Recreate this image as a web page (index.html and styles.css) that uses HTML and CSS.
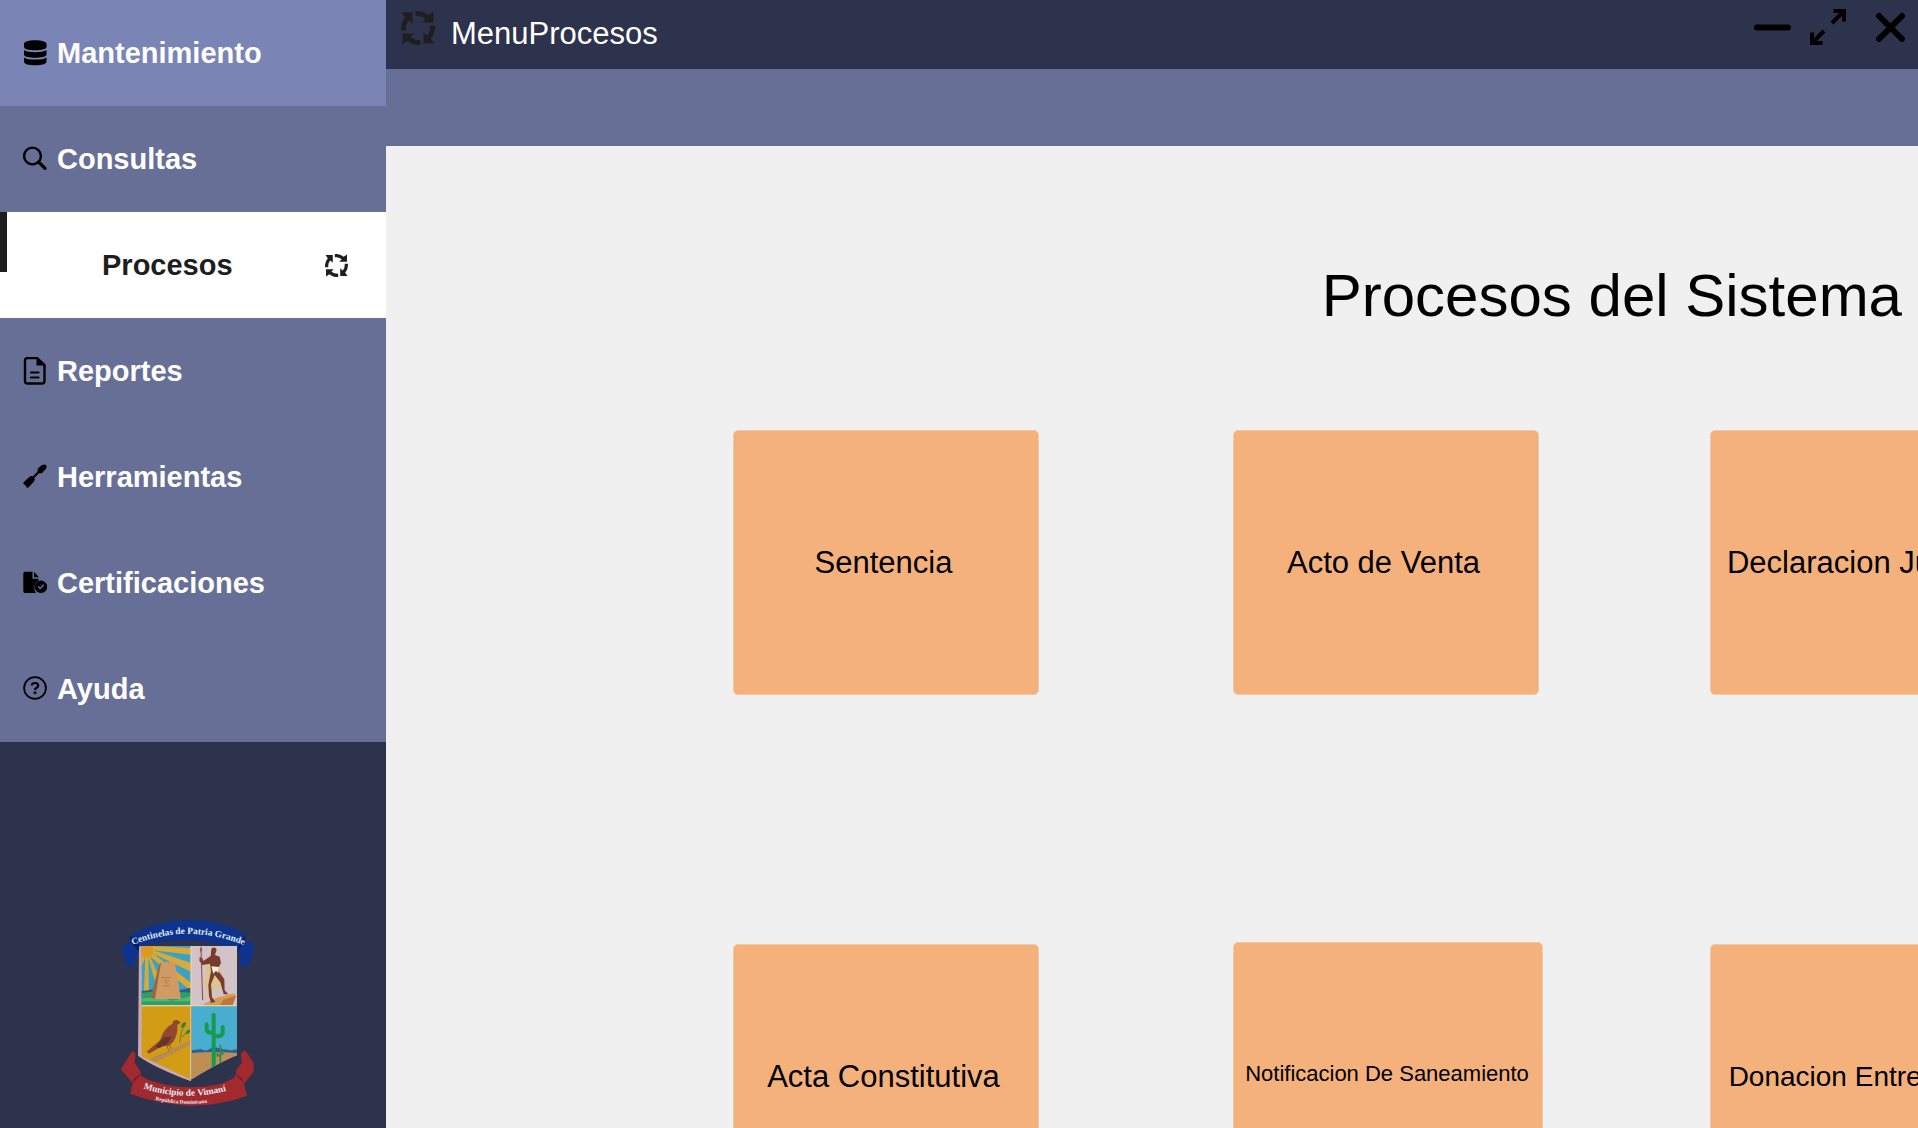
FILE: index.html
```html
<!DOCTYPE html>
<html lang="es">
<head>
  <meta charset="UTF-8">
  <meta name="viewport" content="width=device-width, initial-scale=1.0">
  <title>MenuProcesos</title>
  <link rel="stylesheet" href="styles.css">
</head>
<body>
  <svg class="symbols" aria-hidden="true">
    <symbol id="cycle" viewBox="0 0 34 34">
      <path id="arrow" d="M14.5 0C20 0 24 1 27.500 4.200L32.500.8V11.500H21L24.500 8C22 5.400 19 4.800 14.500 4.800Z"/>
      <use href="#arrow" transform="rotate(90 17 17)"/>
      <use href="#arrow" transform="rotate(180 17 17)"/>
      <use href="#arrow" transform="rotate(270 17 17)"/>
    </symbol>
  </svg>

  <aside class="sidebar">
    <nav class="menu">
      <button class="menu-item hover" type="button">
        <svg class="icon" viewBox="0 0 24 26">
          <path d="M1 4C1 1.500 6 .3 12 .3S23.500 1.500 23.500 4V7C23.500 9.300 18 10.300 12 10.300S1 9.300 1 7Z"/>
          <path d="M1 10C3 11.500 7 12.200 12 12.200S21 11.500 23.500 10V14.500C23.500 16.800 18 17.800 12 17.800S1 16.800 1 14.500Z"/>
          <path d="M1 17.400C3 18.900 7 19.600 12 19.600S21 18.900 23.500 17.400V21.500C23.500 24.200 18 25.300 12 25.300S1 24.200 1 21.500Z"/>
        </svg>
        Mantenimiento
      </button>
      <button class="menu-item" type="button">
        <svg class="icon" viewBox="0 0 24 26">
          <circle cx="9.500" cy="10" r="8.400" fill="none" stroke="#000" stroke-width="2.400"/>
          <path d="M15.600 16L22 22.300" fill="none" stroke="#000" stroke-width="3.200" stroke-linecap="round"/>
        </svg>
        Consultas
      </button>
      <button class="menu-item active" type="button">
        Procesos
        <svg class="icon-end"><use href="#cycle"/></svg>
      </button>
      <button class="menu-item" type="button">
        <svg class="icon icon-tall" viewBox="0 0 24 28">
          <path d="M4.500 1H14L21.500 8V24Q21.500 26.500 19 26.500H4.500Q2 26.500 2 24V3.500Q2 1 4.500 1Z" fill="none" stroke="#000" stroke-width="2.400"/>
          <path d="M13.500 0L22.500 8.600H13.500Z"/>
          <path d="M8 15.500H15.500M8 20.500H15.500" fill="none" stroke="#000" stroke-width="2.200" stroke-linecap="round"/>
        </svg>
        Reportes
      </button>
      <button class="menu-item" type="button">
        <svg class="icon" viewBox="0 0 24 26">
          <path d="M.6 18.200L6.500 12.700Q9 11.200 11 12.900Q12.600 15 11.200 17.300L6 23Q4.500 24.500 3.500 23.200L2.700 21.500L.8 20.200Q0 19.200 .6 18.200Z"/>
          <path d="M10.500 13.300L15.500 8.300" fill="none" stroke="#000" stroke-width="2.200"/>
          <path d="M14.600 4.800L19 1L22 .4Q23.800 .8 23.600 2.800L22.600 5.300L18.800 9.200H15.500L14.600 8.300Z"/>
        </svg>
        Herramientas
      </button>
      <button class="menu-item" type="button">
        <svg class="icon" viewBox="0 0 24 26">
          <path d="M2 1.800H9.500V8.800H15.500V10.800C10.800 13 10.500 19 13 23H2Q.3 23 .3 21.300V3.500Q.3 1.800 2 1.800Z"/>
          <path d="M11 1.800L16 7.300H11Z"/>
          <path fill-rule="evenodd" d="M18 10.600A6.200 6.200 0 1 1 17.900 10.600ZM14.600 16.800L17.200 19.500L21.300 15.200L20.300 14.200L17.200 17.400L15.600 15.800Z"/>
        </svg>
        Certificaciones
      </button>
      <button class="menu-item" type="button">
        <svg class="icon" viewBox="0 0 24 26">
          <g fill="none" stroke="#000">
            <circle cx="12" cy="12" r="10.900" stroke-width="1.800"/>
            <path d="M8.800 9.400Q9 7 12 7Q15.200 7 15.200 9.500Q15.200 11 13.400 12Q12 12.700 12 14" stroke-width="2.200"/>
          </g>
          <circle cx="12" cy="16.800" r="1.500"/>
        </svg>
        Ayuda
      </button>
    </nav>

    <svg class="crest" viewBox="60 50 405 570" role="img" aria-label="Escudo del municipio">
      <defs>
        <clipPath id="shield"><path d="M124 137H411V465Q370 480 273 538Q170 490 124 468Z"/></clipPath>
        <path id="topText" d="M98 134Q265 66 436 136"/>
        <path id="bottomText" d="M130 564Q260 608 400 566"/>
        <path id="smallText" d="M166 599Q258 621 372 600"/>
      </defs>
      <!-- cintas -->
      <path fill="#0c348e" d="M89 106Q175 58 270 59Q365 60 438 102L433 122L461 128L459 160L442 200L421 195V160L412 150Q270 92 126 140L119 160L105 172L104 195L84 200L66 152V140L92 122Z"/>
      <path fill="#071f62" d="M89 106L92 124L126 165L119 135ZM438 102L433 124L412 155L418 130Z"/>
      <path fill="#a22a2f" d="M97 452L107 460L104 488L120 510L124 527Q150 544 200 554Q270 568 350 553Q385 545 405 530L410 508L426 486L422 460L435 450L461 488V514L432 550L441 586Q370 614 270 616Q170 610 90 580L98 548L62 507Z"/>
      <path fill="#711b29" d="M124 520L97 550L104 532ZM405 520L433 550L424 532Z"/>
      <!-- escudo -->
      <path fill="#c9a9b4" d="M117 138H126V466L273 534V543Q160 500 114 466Z"/>
      <g clip-path="url(#shield)">
        <rect x="124" y="137" width="149" height="180" fill="#3aa3c4"/>
        <path fill="#d9a93a" d="M124 137H155L273 143V163L160 150L273 188V214L160 160L273 247V273L150 168L215 317H186L145 172L148 317H130L136 172L124 200Z"/>
        <circle cx="138" cy="151" r="22" fill="#dd9a20"/>
        <path fill="#2a5d8e" d="M124 273L180 264L245 268L273 262V290H124Z"/>
        <path fill="#2d9f68" d="M124 278Q180 270 273 277V317H124Z"/>
        <path fill="#54b873" d="M124 296L180 288L215 302L273 288V303H124Z"/>
        <path fill="#9d683f" d="M152 292L178 190L186 186L165 296Z"/>
        <path fill="#d09a64" d="M165 296L183 188Q202 181 225 188L243 296Z"/>
        <path stroke="#aa6343" stroke-width="2" stroke-dasharray="5 1" d="M184 232H213M192 240H208M193 247H206M190 256H209"/>
        <rect x="273" y="137" width="140" height="180" fill="#d2c3c8"/>
        <path fill="#d79d52" d="M313 310L350 292L403 279L408 286L393 317H310Z"/>
        <path fill="#bc753b" d="M370 298L408 286L397 317H360Z"/>
        <path fill="#dcc58b" d="M320 172L360 180L367 270L348 260L323 289L315 250Z"/>
        <path fill="#793b2c" d="M334 145Q345 136 350 148L345 164L359 169L363 188L356 201L357 214L373 237L374 270L385 282H371L361 246L344 224L333 252L336 290L346 305L333 307L327 288L325 254L333 213L330 190L307 194L298 181L299 170L307 173L310 182L332 167Z"/>
        <path fill="#f2eee6" d="M334 198L357 200L355 219L348 211L340 220Z"/>
        <path fill="none" stroke="#94473b" stroke-width="3" d="M303 143L308 299"/>
        <path fill="#a65146" d="M303 137L307 149L303 157L299 149Z"/>
        <rect x="124" y="317" width="149" height="226" fill="#d29c14"/>
        <path fill="#b88b51" d="M148 477L273 419V431L165 487Z"/>
        <path fill="#91482f" d="M140 454L180 420Q193 381 217 371Q219 357 231 359L243 366L232 374Q234 403 220 424L207 436L185 438L147 460Z"/>
        <path fill="#64362b" d="M166 440L192 411L216 409L202 430L179 443Z"/>
        <path fill="none" stroke="#784728" stroke-width="2" d="M200 436L207 451M209 432L213 446"/>
        <path fill="none" stroke="#5f8040" stroke-width="3" d="M239 426Q242 391 254 376M246 410L260 397"/>
        <path fill="#27854a" d="M242 382Q245 365 258 366Q260 380 242 382ZM256 401Q260 386 271 389Q271 402 256 401Z"/>
        <rect x="276" y="317" width="140" height="226" fill="#49adcf"/>
        <path fill="#315f91" d="M276 450L301 446L318 451L342 440L373 447L393 450L411 447V465H276Z"/>
        <path fill="#bd8f55" d="M276 458Q330 452 413 458V545H276Z"/>
        <path fill="none" stroke="#159b50" stroke-width="12" stroke-linecap="round" stroke-linejoin="round" d="M341 343V515M320 372V389Q322 397 337 397M368 380V398Q366 408 348 408"/>
        <path fill="none" stroke="#35864d" stroke-width="5" stroke-linecap="round" d="M361 436V494M352 459V466H361M368 449V461H361"/>
        <path fill="none" stroke="#e8d1af" stroke-width="4" d="M273 137V543M124 316H413"/>
      </g>
      <!-- lemas -->
      <g class="crest-text">
        <text font-size="28"><textPath href="#topText">Centinelas de Patria Grande</textPath></text>
        <text font-size="28"><textPath href="#bottomText">Municipio de Vimaní</textPath></text>
        <text font-size="16"><textPath href="#smallText">República Dominicana</textPath></text>
      </g>
    </svg>
  </aside>

  <main class="main">
    <header class="topbar">
      <svg class="topbar-icon"><use href="#cycle"/></svg>
      <span class="topbar-title">MenuProcesos</span>
      <div class="controls">
        <button type="button" aria-label="Minimizar">
          <svg width="37" height="36" viewBox="0 0 37 36"><path d="M3 18.500H34" stroke-width="6" stroke-linecap="round"/></svg>
        </button>
        <button type="button" aria-label="Maximizar">
          <svg width="36" height="36" viewBox="0 0 36 36"><path d="M23.500 2H34V12.500M33 3L22 14M2 23.500V34H12.500M3 33L14 22" stroke-width="4"/></svg>
        </button>
        <button type="button" aria-label="Cerrar">
          <svg width="29" height="36" viewBox="0 0 29 36"><path d="M3 7L26 30M26 7L3 30" stroke-width="6" stroke-linecap="round"/></svg>
        </button>
      </div>
    </header>
    <div class="band"></div>

    <section class="content">
      <h1>Procesos del Sistema</h1>
      <div class="grid">
        <button class="card c1" type="button">Sentencia</button>
        <button class="card c2" type="button">Acto de Venta</button>
        <button class="card c3" type="button">Declaracion Jurada</button>
        <button class="card c1" type="button">Acta Constitutiva</button>
        <button class="card c2 card-big" type="button">Notificacion De Saneamiento</button>
        <button class="card c3 card-mid" type="button">Donacion Entre Vivos</button>
      </div>
    </section>
  </main>
</body>
</html>
```
FILE: styles.css
```css
* {
  box-sizing: border-box;
}

body {
  margin: 0;
  height: 100vh;
  display: flex;
  overflow: hidden;
  font-family: "Liberation Sans", Arial, sans-serif;
  background-color: #f0f0f0;
}

button {
  border: 0;
  padding: 0;
  margin: 0;
  font-family: inherit;
  cursor: pointer;
}

.symbols {
  position: absolute;
  width: 0;
  height: 0;
}

/* Menu lateral */
.sidebar {
  width: 386px;
  flex-shrink: 0;
  display: flex;
  flex-direction: column;
  background-color: #2d324d;
}

.menu {
  display: flex;
  flex-direction: column;
}

.menu-item {
  display: flex;
  align-items: center;
  gap: 10px;
  height: 106px;
  padding: 0 38px 0 23px;
  font-size: 29px;
  font-weight: bold;
  color: #fff;
  background-color: #686f96;
}

.menu-item.hover {
  background-color: #7b85b5;
}

.menu-item.active {
  position: relative;
  justify-content: space-between;
  padding-left: 102px;
  color: #1e1e1e;
  background-color: #fff;
}

.menu-item.active::before {
  content: "";
  position: absolute;
  top: 0;
  left: 0;
  width: 7px;
  height: 60px;
  background-color: #1e1e1e;
}

.icon {
  width: 24px;
  height: 26px;
}

.icon-tall {
  height: 28px;
}

.icon-end {
  width: 23px;
  height: 23px;
  fill: #1e1e1e;
}

.crest {
  width: 135px;
  height: 190px;
  margin: auto 0 21px 120px;
}

.crest-text {
  fill: #e4edf4;
  font-family: "Liberation Serif", serif;
  font-weight: bold;
}

/* Panel principal */
.main {
  flex: 1;
  min-width: 0;
  overflow: hidden;
}

.topbar {
  display: flex;
  align-items: flex-start;
  height: 69px;
  padding: 9px 13px 0 15px;
  background-color: #2d324d;
}

.topbar-icon {
  width: 34px;
  height: 34px;
  margin-top: 2px;
  fill: #1e1e1e;
}

.topbar-title {
  margin-left: 16px;
  font-size: 31px;
  line-height: 50px;
  color: #fff;
}

.controls {
  display: flex;
  margin-left: auto;
}

.controls button {
  display: flex;
  background: none;
}

.controls button + button {
  margin-left: 19px;
}

.controls button:last-child {
  margin-left: 30px;
}

.controls path {
  fill: none;
  stroke: #000;
}

.band {
  height: 77px;
  background-color: #686f96;
}

.content {
  padding-top: 115px;
}

h1 {
  margin: 0;
  padding-right: 16px;
  font-size: 60px;
  font-weight: normal;
  line-height: 70px;
  text-align: right;
  white-space: nowrap;
}

.grid {
  display: grid;
  grid-template-columns: 347fr 500fr 477fr 208fr;
  row-gap: 247px;
  align-items: center;
  margin-top: 99px;
}

.card {
  width: 306px;
  height: 265px;
  padding-right: 5px;
  border: 1px solid #f5c8a2;
  border-radius: 5px;
  font-size: 31px;
  color: #000;
  background-color: #f4b17b;
  white-space: nowrap;
}

.c1 {
  grid-column: 2;
}

.c2 {
  grid-column: 3;
}

/* la ultima columna sigue fuera de la ventana */
.c3 {
  grid-column: 4;
  margin-right: -98px;
}

.card-big {
  width: 310px;
  height: 269px;
  padding-right: 2px;
  padding-bottom: 5px;
  font-size: 22px;
}

.card-mid {
  padding-right: 0;
  font-size: 28px;
}
```
